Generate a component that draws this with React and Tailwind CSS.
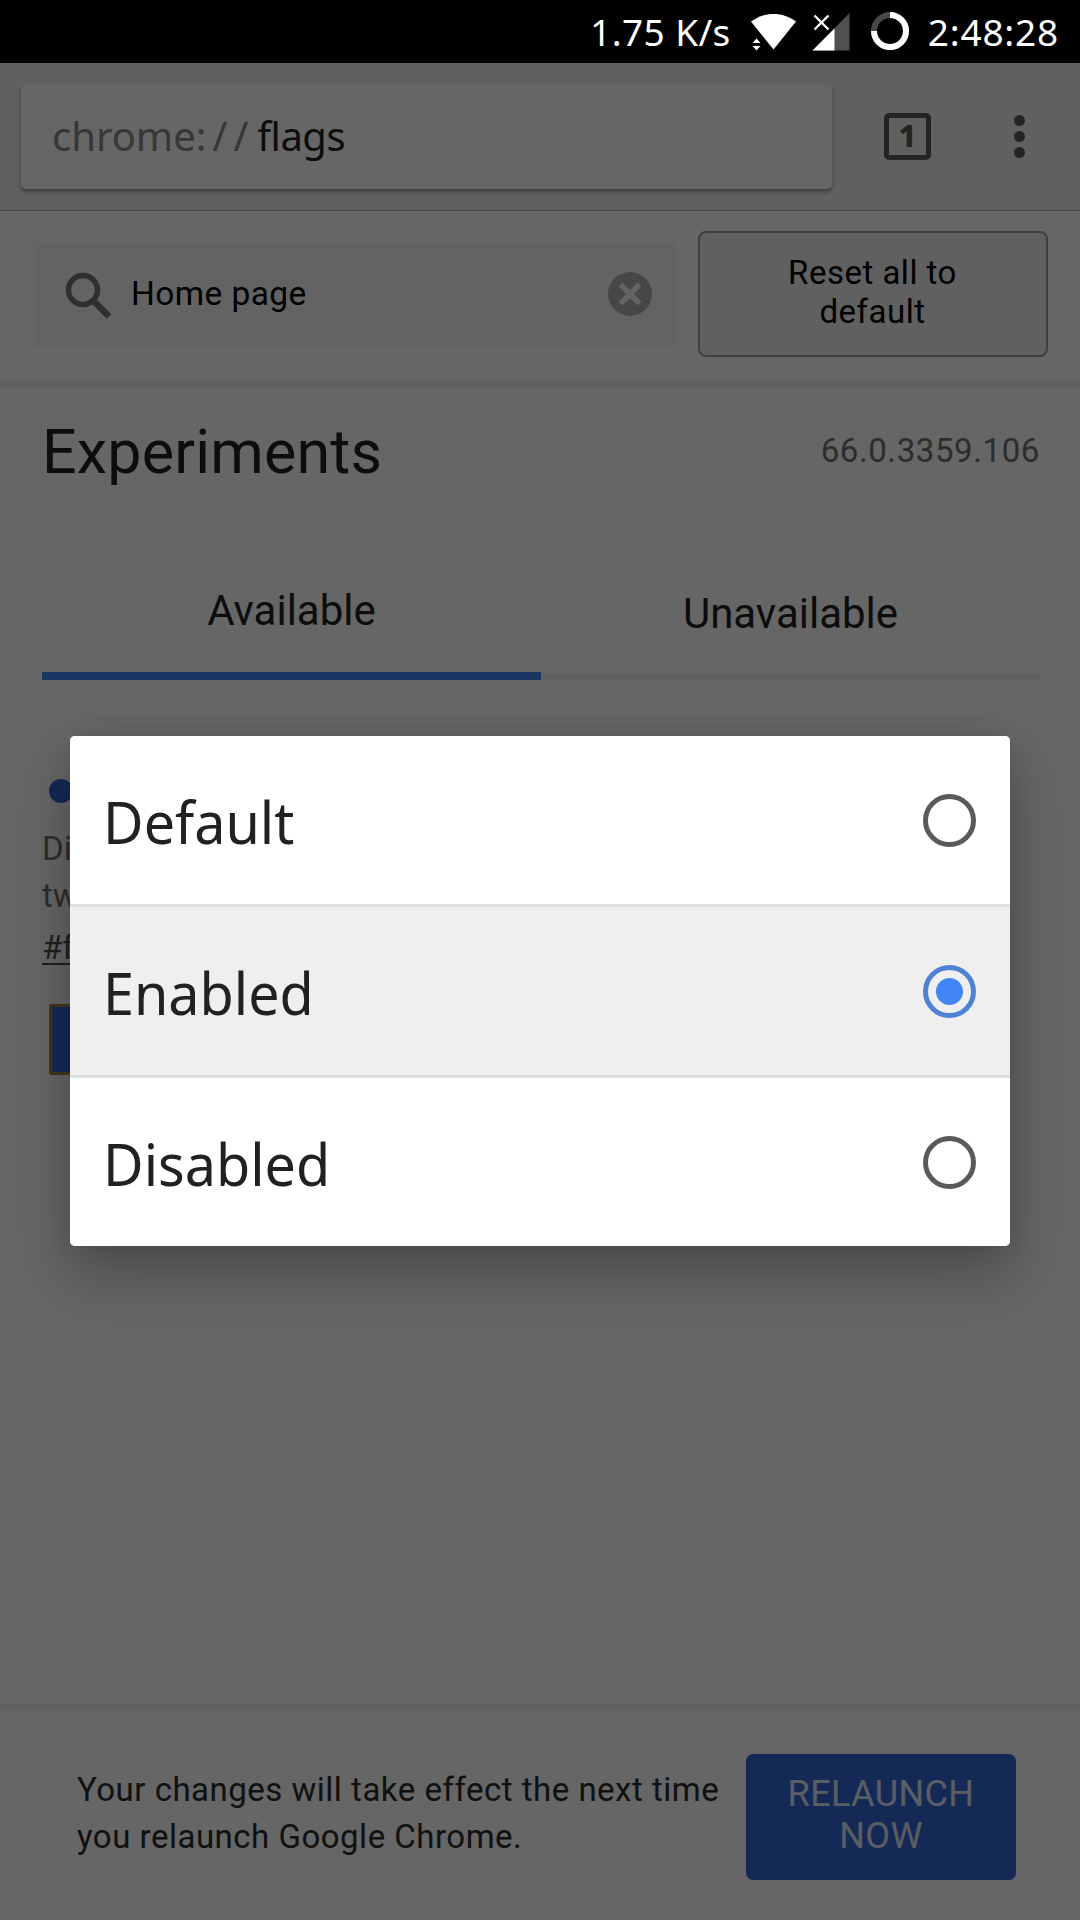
import { useState } from "react";

const options = ["Default", "Enabled", "Disabled"];

function StatusBar() {
  return (
    <div className="flex h-[63px] shrink-0 items-center justify-end bg-black pr-[21px] font-['Noto_Sans',sans-serif] text-[37px] leading-[63px] text-white">
      <span className="-mt-px tracking-[0.4px]">1.75 K/s</span>
      <svg className="ml-[19px] h-[63px] w-[48px]" viewBox="0 0 48 63" fill="#fff">
        <path d="M1 21.5C8 16.5 15 14 23.5 14S39 16.5 46 21.5L23.5 49.5Z" />
        <path d="M6.500 38.500l4 4.500h-8zM6.500 50.500l-4-4.500h8z" stroke="#000" strokeWidth="4" paintOrder="stroke" />
      </svg>
      <svg className="ml-[14px] h-[63px] w-[40px]" viewBox="0 0 40 63">
        <path d="M0.500 50.500L37.500 13V50.500Z" fill="#505050" />
        <path d="M0.500 50.500L22.500 28.500V50.500Z" fill="#fff" />
        <path d="M2.500 15.500l14 14M16.500 15.500l-14 14" stroke="#fff" strokeWidth="2.400" />
      </svg>
      <svg className="ml-[18px] h-[63px] w-[40px]" viewBox="0 0 40 63" fill="none" strokeWidth="6">
        <circle cx="20" cy="31" r="16" stroke="#484848" />
        <path d="M20 15A16 16 0 1 1 4 31" stroke="#fff" />
      </svg>
      <span className="-mt-px ml-[18px] tracking-[0.8px]">2:48:28</span>
    </div>
  );
}

function Toolbar() {
  return (
    <div className="flex h-[148px] items-start border-b border-[#b0b0b0] bg-[#f1f1f1] pt-[21px] pl-[21px]">
      <div className="flex h-[105px] w-[811px] items-center rounded-[5px] bg-white pb-[2px] pl-[31px] font-['Noto_Sans',sans-serif] text-[40px] shadow-[0_3px_4px_rgba(0,0,0,0.35)]">
        <span className="text-[#8a8a8a]">
          chrome:<span className="ml-[6px] tracking-[6px]">//</span>
        </span>
        <span className="ml-[3px] tracking-[-0.5px] text-[#212121]">flags</span>
      </div>
      <div className="mt-[29px] ml-[52px] flex size-[47px] items-center justify-center rounded-[5px] border-[5px] border-[#5a5a5a] font-['Noto_Sans',sans-serif] text-[31px] leading-none font-extrabold text-[#5a5a5a]">
        <span className="-mt-[2px]">1</span>
      </div>
      <div className="mt-[31px] ml-[83px] flex flex-col gap-[5px]">
        <span className="size-[11px] rounded-full bg-[#5a5a5a]" />
        <span className="size-[11px] rounded-full bg-[#5a5a5a]" />
        <span className="size-[11px] rounded-full bg-[#5a5a5a]" />
      </div>
    </div>
  );
}

function SearchRow() {
  return (
    <div className="flex h-[177px] items-start border-b-[7px] border-[#f0f0f0] pl-[34px]">
      <div className="mt-[31px] flex h-[105px] w-[642px] items-center bg-[#f7f7f7] pl-[30px]">
        <svg className="h-[50px] w-[50px] shrink-0" viewBox="0 0 50 50" fill="none" stroke="#757575">
          <circle cx="19" cy="20" r="14.500" strokeWidth="5.500" />
          <path d="M29 30.500L45 46.500" strokeWidth="6.500" />
        </svg>
        <span className="ml-[17px] grow text-[33.500px] tracking-[0.4px] text-black">Home page</span>
        <svg className="mr-[24px] mb-px h-[44px] w-[44px]" viewBox="0 0 44 44">
          <circle cx="22" cy="22" r="22" fill="#b2b2b2" />
          <path d="M12.500 12.500l19 19M31.500 12.500l-19 19" stroke="#f7f7f7" strokeWidth="5.500" />
        </svg>
      </div>
      <button className="mt-[20px] ml-[22px] flex h-[126px] w-[350px] items-center justify-center rounded-[8px] border-[2.500px] border-[#9f9f9f] bg-[#efefef] pr-px pb-[5px] text-[33px] leading-[39px] tracking-[0.5px] text-black">
        <span>
          Reset all to
          <br />
          default
        </span>
      </button>
    </div>
  );
}

function Experiments() {
  return (
    <div className="grow pt-[28px] pr-[40px] pl-[42px] text-[#212121]">
      <div className="flex h-[72px] items-start justify-between">
        <h1 className="text-[61px] leading-[72px] tracking-[0.2px]">Experiments</h1>
        <span className="mt-[12px] text-[33px] leading-[46px] tracking-[0.6px] text-[#707070]">66.0.3359.106</span>
      </div>
      <div className="grid h-[192px] grid-cols-2 text-center text-[42px] leading-[48px]">
        <div className="border-b-[8px] border-[#4285f4] pt-[99px]">Available</div>
        <div className="mt-[2px] border-b-[6px] border-[#efefef] pt-[100px]">Unavailable</div>
      </div>
      <div className="mt-[99px] ml-[7px] size-[24px] rounded-full bg-[#3367d6]" />
      <div className="mt-[22px] text-[33px] leading-[47px] text-[#707070]">
        <p>Di</p>
        <p>tw</p>
        <a className="mt-[5px] block w-[40px] text-[#505050] underline decoration-2 underline-offset-[4px]">#f</a>
      </div>
      <div className="mt-[33px] ml-[7px] h-[71px] w-[300px] rounded-[2px] border-[3px] border-[#b08a40] bg-[#3367d6]" />
    </div>
  );
}

function RelaunchBar() {
  return (
    <div className="flex h-[216px] items-start border-t-[5px] border-[#efefef] bg-white pl-[77px]">
      <p className="mt-[58px] w-[669px] text-[33px] leading-[46.500px] tracking-[0.5px] text-[#2b2b2b]">
        Your changes will take effect the next time
        <br />
        you relaunch Google Chrome.
      </p>
      <button className="mt-[45px] flex h-[126px] w-[270px] items-center justify-center rounded-[7px] bg-[#3367d6] pb-[4px] text-[36px] leading-[42px] tracking-[0.4px] text-white/85">
        <span>
          RELAUNCH
          <br />
          NOW
        </span>
      </button>
    </div>
  );
}

function Radio({ checked }) {
  if (checked) {
    return (
      <span className="flex size-[53px] items-center justify-center rounded-full border-[5px] border-[#4f82d2]">
        <span className="size-[27px] rounded-full bg-[#4285f4]" />
      </span>
    );
  }
  return <span className="size-[53px] rounded-full border-[5px] border-[#5a5a5a]" />;
}

export default function App() {
  const [selected, setSelected] = useState("Enabled");

  return (
    <div className="flex h-[1920px] w-[1080px] flex-col overflow-hidden font-[Roboto,sans-serif]">
      <StatusBar />
      <div className="relative flex grow flex-col bg-white">
        <Toolbar />
        <SearchRow />
        <Experiments />
        <RelaunchBar />

        {/* dialog over the dimmed page */}
        <div className="absolute inset-0 bg-black/60 px-[70px] pt-[673px]">
          <div className="h-[510px] divide-y-[3px] divide-[#e0e0e0] overflow-hidden rounded-[5px] bg-white shadow-[0_28px_60px_rgba(0,0,0,0.27),0_0_24px_rgba(0,0,0,0.08)]">
            {options.map((option) => (
              <div
                key={option}
                onClick={() => setSelected(option)}
                className={`flex h-[171px] items-center justify-between pr-[34px] pl-[33px] last:h-[168px] ${
                  selected === option ? "bg-[#efefef]" : "bg-white"
                }`}
              >
                <span className="mt-[3px] origin-left scale-x-[0.96] font-['Noto_Sans',sans-serif] text-[58px] leading-[80px] text-[#212121]">
                  {option}
                </span>
                <Radio checked={selected === option} />
              </div>
            ))}
          </div>
        </div>
      </div>
    </div>
  );
}
